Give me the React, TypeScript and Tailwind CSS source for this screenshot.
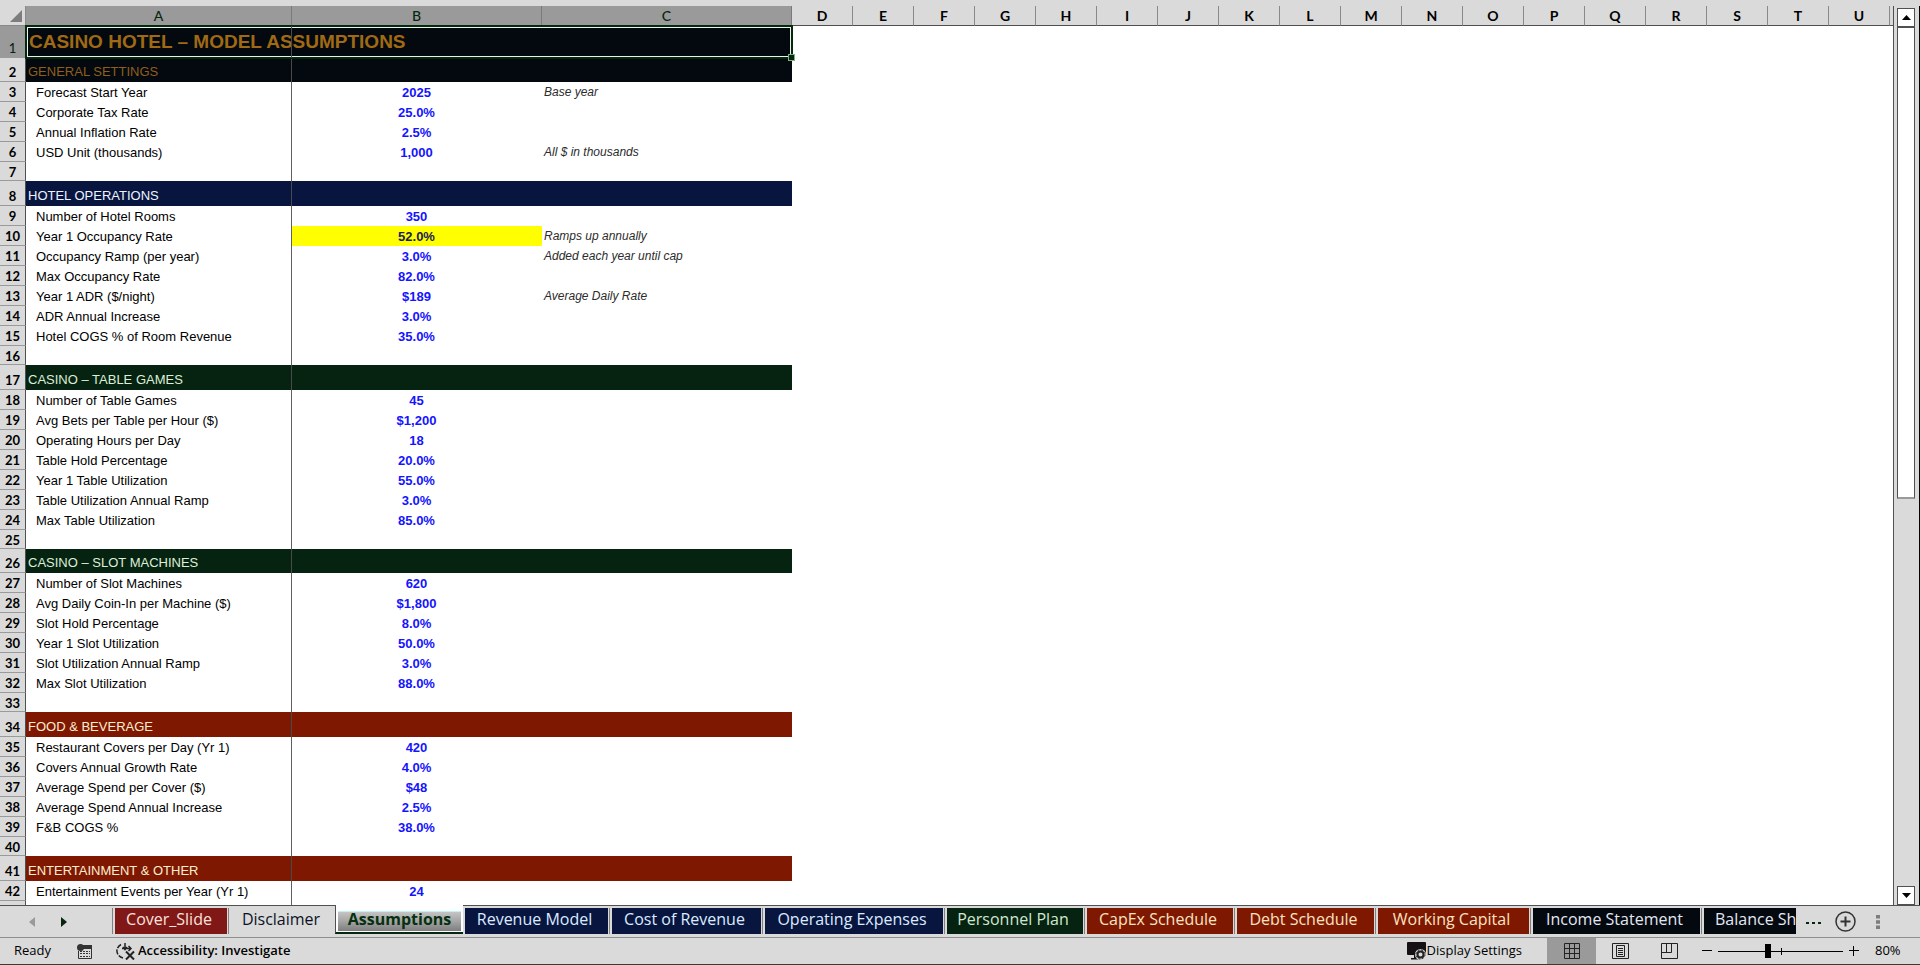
import clsx from "clsx";

type Row = {
  kind: "title" | "section" | "data" | "blank";
  label?: string;
  value?: string;
  note?: string;
  tone?: string;
  size?: string;
  highlight?: boolean;
};

const BLACK = "bg-[#04080f] text-[#8f5f1c]";
const NAVY = "bg-[#08163f] text-[#eef4ff]";
const GREEN = "bg-[#062210] text-[#dcefd8]";
const RED = "bg-[#7f1800] text-[#fdeed2]";

const data = (label: string, value: string, note?: string, highlight?: boolean): Row => ({
  kind: "data",
  label,
  value,
  note,
  highlight,
});
const section = (label: string, tone: string, size = "h-[25px]"): Row => ({
  kind: "section",
  label,
  tone,
  size,
});
const blank: Row = { kind: "blank" };

const rows: Row[] = [
  { kind: "title", label: "CASINO HOTEL – MODEL ASSUMPTIONS" },
  section("GENERAL SETTINGS", BLACK, "h-[24px]"),
  data("Forecast Start Year", "2025", "Base year"),
  data("Corporate Tax Rate", "25.0%"),
  data("Annual Inflation Rate", "2.5%"),
  data("USD Unit (thousands)", "1,000", "All $ in thousands"),
  blank,
  section("HOTEL OPERATIONS", NAVY),
  data("Number of Hotel Rooms", "350"),
  data("Year 1 Occupancy Rate", "52.0%", "Ramps up annually", true),
  data("Occupancy Ramp (per year)", "3.0%", "Added each year until cap"),
  data("Max Occupancy Rate", "82.0%"),
  data("Year 1 ADR ($/night)", "$189", "Average Daily Rate"),
  data("ADR Annual Increase", "3.0%"),
  data("Hotel COGS % of Room Revenue", "35.0%"),
  blank,
  section("CASINO – TABLE GAMES", GREEN),
  data("Number of Table Games", "45"),
  data("Avg Bets per Table per Hour ($)", "$1,200"),
  data("Operating Hours per Day", "18"),
  data("Table Hold Percentage", "20.0%"),
  data("Year 1 Table Utilization", "55.0%"),
  data("Table Utilization Annual Ramp", "3.0%"),
  data("Max Table Utilization", "85.0%"),
  blank,
  section("CASINO – SLOT MACHINES", GREEN, "h-[24px]"),
  data("Number of Slot Machines", "620"),
  data("Avg Daily Coin-In per Machine ($)", "$1,800"),
  data("Slot Hold Percentage", "8.0%"),
  data("Year 1 Slot Utilization", "50.0%"),
  data("Slot Utilization Annual Ramp", "3.0%"),
  data("Max Slot Utilization", "88.0%"),
  blank,
  section("FOOD & BEVERAGE", RED),
  data("Restaurant Covers per Day (Yr 1)", "420"),
  data("Covers Annual Growth Rate", "4.0%"),
  data("Average Spend per Cover ($)", "$48"),
  data("Average Spend Annual Increase", "2.5%"),
  data("F&B COGS %", "38.0%"),
  blank,
  section("ENTERTAINMENT & OTHER", RED),
  data("Entertainment Events per Year (Yr 1)", "24"),
];

const otherColumns = "DEFGHIJKLMNOPQRSTU".split("");

const tabs = [
  { name: "Cover_Slide", style: "w-[112px] bg-[#801818] text-[#fbe3dc]" },
  { name: "Disclaimer", style: "w-[104px] text-[#0c1226]" },
  { name: "Assumptions", style: "" },
  { name: "Revenue Model", style: "w-[143px] bg-[#08163f] text-[#dcebff]" },
  { name: "Cost of Revenue", style: "w-[149px] bg-[#08163f] text-[#dcebff]" },
  { name: "Operating Expenses", style: "w-[178px] bg-[#08163f] text-[#dcebff]" },
  { name: "Personnel Plan", style: "w-[136px] bg-[#062210] text-[#cfe8cf]" },
  { name: "CapEx Schedule", style: "w-[146px] bg-[#7f1800] text-[#fbe3c0]" },
  { name: "Debt Schedule", style: "w-[137px] bg-[#7f1800] text-[#fbe3c0]" },
  { name: "Working Capital", style: "w-[151px] bg-[#7f1800] text-[#fbe3c0]" },
  { name: "Income Statement", style: "w-[167px] bg-[#04080f] text-[#e2e8f2]" },
];

function ColumnHeader() {
  const picked = "border-r border-[#7a7a7a] bg-[#9a9a9a] font-medium text-[#06260f]";
  return (
    <thead className="font-[Lato,'Open_Sans',sans-serif] text-[14px] leading-[18px]">
      <tr className="h-[20px]">
        <th className="border-r border-b border-[#8a8a8a] bg-[#dadada] p-0">
          <svg className="ml-[10px] h-3 w-3" viewBox="0 0 12 12" aria-label="Select all">
            <path d="M12 0V12H0Z" fill="#7d7d7d" />
          </svg>
        </th>
        <th className={clsx(picked, "p-0")}>A</th>
        <th className={clsx(picked, "p-0")}>B</th>
        <th className={clsx(picked, "p-0")}>C</th>
        {otherColumns.map((c) => (
          <th key={c} className="border-r border-b border-r-[#8a8a8a] border-b-[#505050] bg-[#dadada] p-0 font-bold">
            {c}
          </th>
        ))}
        <th className="border-b border-[#505050] bg-[#dadada] p-0" />
      </tr>
    </thead>
  );
}

function RowNumber({ n, active, tight }: { n: number; active?: boolean; tight?: boolean }) {
  return (
    <th
      scope="row"
      className={clsx(
        "border-r border-b border-r-[#505050] border-b-[#9a9a9a] p-0 text-center align-bottom font-[Lato,'Open_Sans',sans-serif] text-[13px]",
        tight ? "leading-[15px]" : "leading-[17px]",
        active ? "bg-[#9a9a9a] font-medium text-[#06260f]" : "bg-[#dadada] font-bold text-black",
      )}
    >
      {n}
    </th>
  );
}

function SheetRow({ row, n }: { row: Row; n: number }) {
  if (row.kind === "title") {
    return (
      <tr className="h-[32px]">
        <RowNumber n={n} active />
        <td colSpan={3} className="relative bg-[#04080f] p-0 align-middle">
          <span className="block pl-[3px] text-[19px] leading-[28px] font-bold whitespace-nowrap text-[#a06a14]">
            {row.label}
          </span>
          <span className="absolute -inset-px border-2 border-[#06280f]" />
          <span className="absolute inset-px border border-[#e6f5e6]" />
          <span className="absolute top-0 bottom-0 left-[265px] w-px bg-[#4a4a4a]" />
          <span className="absolute -right-[2px] -bottom-[2px] h-[5px] w-[5px] bg-[#06280f] outline outline-[#7fae88]" />
        </td>
      </tr>
    );
  }
  if (row.kind === "section") {
    return (
      <tr className={row.size}>
        <RowNumber n={n} />
        <td className={clsx("border-r border-[#4a4a4a] p-0 pl-[2px] align-bottom leading-[20px]", row.tone)}>
          {row.label}
        </td>
        <td colSpan={2} className={clsx("p-0", row.tone)} />
      </tr>
    );
  }
  if (row.kind === "blank") {
    return (
      <tr className="h-[19px]">
        <RowNumber n={n} tight />
        <td className="border-r border-[#606060] p-0" />
      </tr>
    );
  }
  return (
    <tr className="h-[20px]">
      <RowNumber n={n} />
      <td className="border-r border-[#606060] p-0 pl-[10px] leading-[19px] whitespace-nowrap">{row.label}</td>
      <td
        className={clsx(
          "p-0 pr-px text-center leading-[19px] font-bold",
          row.highlight ? "bg-[#ffff00] text-[#1c1c50]" : "text-[#1414ff]",
        )}
      >
        {row.value}
      </td>
      <td className="p-0 pl-[2px] text-[12px] leading-[19px] whitespace-nowrap text-[#2c2c2c] italic">{row.note}</td>
    </tr>
  );
}

function Sheet() {
  return (
    <div className="min-w-0 flex-1 overflow-hidden border-r border-[#505050] bg-white">
      <table className="w-[1893px] table-fixed border-separate border-spacing-0 font-['Liberation_Sans',Arial,sans-serif] text-[13px] text-black">
        <colgroup>
          <col className="w-[26px]" />
          <col className="w-[266px]" />
          <col className="w-[250px]" />
          <col className="w-[250px]" />
          {otherColumns.map((c) => (
            <col key={c} className="w-[61px]" />
          ))}
          <col />
        </colgroup>
        <ColumnHeader />
        <tbody>
          {rows.map((row, i) => (
            <SheetRow key={i} row={row} n={i + 1} />
          ))}
          <tr className="h-[20px]">
            <th className="border-r border-[#505050] bg-[#dadada] p-0" />
            <td className="border-r border-[#606060] p-0" />
          </tr>
        </tbody>
      </table>
    </div>
  );
}

function ScrollBar() {
  const box = "flex w-full items-center justify-center border border-[#505050] bg-white";
  return (
    <div className="flex w-[26px] flex-col border-r border-black bg-[#dadada] pt-[2px] pr-[4px] pl-[3px]">
      <button className={clsx(box, "h-[19px]")} aria-label="Scroll up">
        <svg width="9" height="5" viewBox="0 0 9 5">
          <path d="M0 5L4.500 0L9 5Z" fill="#000" />
        </svg>
      </button>
      <div className="flex flex-1 flex-col">
        <div className="h-[55%] w-full border border-b-2 border-[#505050] border-b-[#9a9a9a] bg-white" />
      </div>
      <button className={clsx(box, "h-[19px]")} aria-label="Scroll down">
        <svg width="9" height="5" viewBox="0 0 9 5">
          <path d="M0 0H9L4.500 5Z" fill="#000" />
        </svg>
      </button>
    </div>
  );
}

function SheetTabs() {
  return (
    <nav className="flex h-[33px] border-t border-b border-t-[#505050] border-b-[#8e8e8e] bg-[#dadada] font-['Open_Sans','Noto_Sans',sans-serif] text-[16px] leading-[22px]">
      <div className="flex w-[112px] shrink-0 items-center pl-[29px]">
        <button className="mr-[26px]" aria-label="Previous sheet">
          <svg width="6" height="10" viewBox="0 0 6 10">
            <path d="M6 0V10L0 5Z" fill="#9a9a9a" />
          </svg>
        </button>
        <button aria-label="Next sheet">
          <svg width="6" height="10" viewBox="0 0 6 10">
            <path d="M0 0V10L6 5Z" fill="#06260f" />
          </svg>
        </button>
      </div>
      {tabs.map((tab) =>
        tab.name === "Assumptions" ? (
          <button
            key={tab.name}
            className="-mt-px h-[29px] w-[128px] shrink-0 border-b-2 border-l border-b-[#06260f] border-l-[#505050] bg-white px-[2px] pt-[5px] font-bold text-[#06300f]"
          >
            <span className="block h-[20px] border-t border-[#bff2f2] bg-linear-to-b from-[#c4c4c4] via-[#a4a4a4] to-[#7e7e7e] leading-[15px]">
              {tab.name}
            </span>
          </button>
        ) : (
          <div
            key={tab.name}
            className={clsx(
              "mt-[2px] h-[26px] shrink-0 border-[#808080] pl-[2px]",
              tab.name !== "Revenue Model" && "border-l",
              tab.name !== "Disclaimer" && "pr-px",
            )}
          >
            <button className={clsx("h-[26px] pr-[4px] pb-[4px] whitespace-nowrap", tab.style)}>{tab.name}</button>
          </div>
        ),
      )}
      <div className="mt-[2px] h-[26px] shrink-0 border-l border-[#808080] pl-[2px]">
        <button className="h-[26px] w-[92px] overflow-hidden bg-[#04080f] pb-[4px] pl-[11px] text-left whitespace-nowrap text-[#e2e8f2]">
          Balance Sheet
        </button>
      </div>
      <div className="flex items-center pl-[10px]">
        <button className="mr-[14px] flex gap-[3px] pt-[3px]" aria-label="More sheets">
          <i className="h-[2px] w-[3px] bg-[#06260f]" />
          <i className="h-[2px] w-[3px] bg-[#06260f]" />
          <i className="h-[2px] w-[3px] bg-[#06260f]" />
        </button>
        <button className="mr-[20px]" aria-label="New sheet">
          <svg width="21" height="21" viewBox="0 0 21 21" fill="none" stroke="#333">
            <circle cx="10.500" cy="10.500" r="9.500" strokeWidth="1.500" />
            <path d="M5.500 10.500H15.500M10.500 5.500V15.500" strokeWidth="2" />
          </svg>
        </button>
        <button aria-label="Resize tab bar">
          <svg width="4" height="14" viewBox="0 0 4 14" fill="#7d7d7d">
            <path d="M0 0H4V3.500H0ZM0 5.300H4V8.800H0ZM0 10.500H4V14H0Z" />
          </svg>
        </button>
      </div>
    </nav>
  );
}

function StatusBar() {
  return (
    <footer className="flex h-[27px] items-center border-b border-[#3c3c28] bg-[#dadada] font-['Open_Sans','Noto_Sans',sans-serif] text-[13px] text-black">
      <span className="w-[77px] pl-[14px]">Ready</span>
      <button className="mr-[24px]" aria-label="Record macro">
        <svg width="15" height="15" viewBox="0 0 15 15">
          <path d="M3 2.500H14.500V14.500H1.500V7" fill="none" stroke="#333" />
          <path d="M6 1H15V5H6Z" fill="#333" />
          <circle cx="3.500" cy="3.500" r="3.500" fill="#333" />
          <path d="M3 7.500H13M3 9.500H13M3 12.500H13" stroke="#333" strokeDasharray="2 1" />
        </svg>
      </button>
      <button className="flex items-center gap-[3px] font-semibold whitespace-nowrap">
        <svg width="19" height="17" viewBox="0 0 19 17" fill="none" stroke="#222" strokeWidth="1.500">
          <path d="M5 1.500C1.500 3.500 0 7 1.500 10.500C2.500 13 4.500 14.500 7 15" strokeDasharray="5 1.500" />
          <path d="M9 0V7M6 5.500H15M12.500 3L15 5.500L12.500 8M7 4L9 6.500L11 4" />
          <path d="M10 8.500L18 16.500M18 8.500L10 16.500" strokeWidth="2" />
        </svg>
        Accessibility: Investigate
      </button>
      <div className="ml-auto flex h-full items-center">
        <button className="mr-[25px] flex items-center gap-px whitespace-nowrap">
          <svg width="19" height="18" viewBox="0 0 19 18">
            <path d="M1 0H18Q19 0 19 1V12Q19 13 18 13H1Q0 13 0 12V1Q0 0 1 0Z" fill="#141014" />
            <path d="M7 13H10V16H13V17.500H4V16H7Z" fill="#141014" />
            <circle cx="13.500" cy="12.500" r="5.500" fill="#dadada" />
            <circle cx="13.500" cy="12.500" r="3" fill="none" stroke="#222" strokeWidth="2" />
            <circle cx="13.500" cy="12.500" r="4.500" fill="none" stroke="#222" strokeDasharray="2 1.500" />
          </svg>
          Display Settings
        </button>
        <button className="flex h-full w-[49px] items-center justify-center bg-[#9a9a9a]" aria-label="Normal">
          <svg width="16" height="16" viewBox="0 0 16 16" fill="none" stroke="#222">
            <path d="M.5.500H15.500V15.500H.5ZM5.500 0V16M10.500 0V16M0 5.500H16M0 10.500H16" />
          </svg>
        </button>
        <button className="flex h-full w-[49px] items-center justify-center" aria-label="Page layout">
          <svg width="17" height="16" viewBox="0 0 17 16" fill="none" stroke="#222">
            <path d="M.5.500H16.500V15.500H.5ZM4.500 2.500H12.500V13.500H4.500ZM6 5.500H11M6 7.500H11M6 9.500H11M6 11.500H11" />
          </svg>
        </button>
        <button className="flex h-full w-[49px] items-center justify-center" aria-label="Page break preview">
          <svg width="17" height="16" viewBox="0 0 17 16" fill="none" stroke="#222">
            <path d="M.5.500H16.500V15.500H.5ZM5.500 0V9.500M10.500 0V9.500M0 9.500H10.500" />
          </svg>
        </button>
        <button className="ml-[8px]" aria-label="Zoom out">
          <svg width="10" height="10" viewBox="0 0 10 10" stroke="#000">
            <path d="M0 4.500H10" />
          </svg>
        </button>
        <div className="mx-[6px] flex h-[14px] w-[125px] items-center bg-[linear-gradient(#000,#000)] bg-[length:100%_1px] bg-center bg-no-repeat">
          <span className="ml-[47px] h-[14px] w-[6px] bg-black" />
          <span className="ml-[10px] h-[7px] w-px bg-black" />
        </div>
        <button aria-label="Zoom in">
          <svg width="10" height="10" viewBox="0 0 10 10" stroke="#000">
            <path d="M0 4.500H10M4.500 0V10" />
          </svg>
        </button>
        <span className="w-[61px] pl-[16px]">80%</span>
      </div>
    </footer>
  );
}

export default function App() {
  return (
    <div className="flex h-screen flex-col overflow-hidden bg-[#dadada]">
      <main className="flex min-h-0 flex-1 pt-[6px]">
        <Sheet />
        <ScrollBar />
      </main>
      <SheetTabs />
      <StatusBar />
    </div>
  );
}
